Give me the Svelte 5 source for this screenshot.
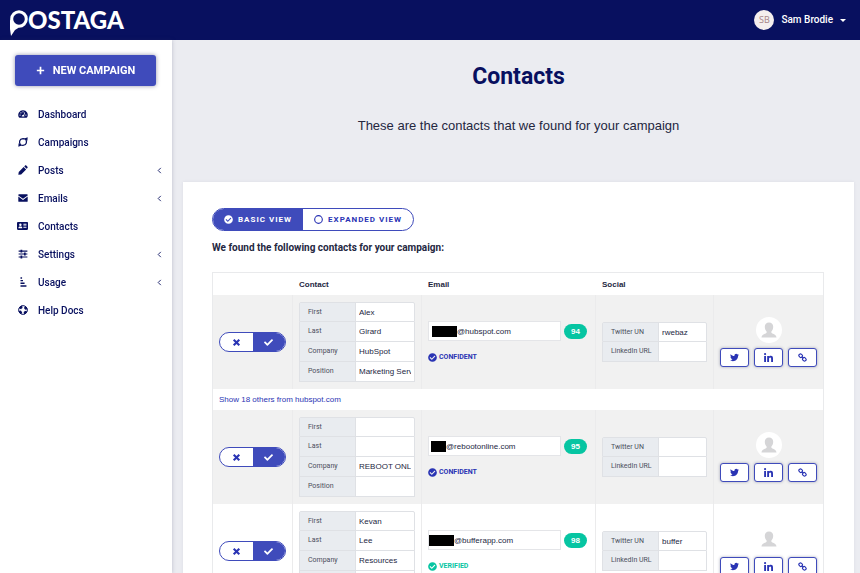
<script lang="ts">
  interface Contact {
    id: number;
    first: string;
    last: string;
    company: string;
    position: string;
    domain: string;
    hidden: { left: number; width: number };
    score: number;
    status: 'confident' | 'verified';
    twitter: string;
    linkedin: string;
    others?: number;
  }

  const NAV = [
    { label: 'Dashboard', icon: 'gauge', children: false },
    { label: 'Campaigns', icon: 'cycle', children: false },
    { label: 'Posts', icon: 'pencil', children: true },
    { label: 'Emails', icon: 'envelope', children: true },
    { label: 'Contacts', icon: 'card', children: false },
    { label: 'Settings', icon: 'sliders', children: true },
    { label: 'Usage', icon: 'usage', children: true },
    { label: 'Help Docs', icon: 'ring', children: false },
  ];

  const FIELDS = [
    { key: 'first', label: 'First' },
    { key: 'last', label: 'Last' },
    { key: 'company', label: 'Company' },
    { key: 'position', label: 'Position' },
  ] as const;

  const SOCIAL = [
    { key: 'twitter', label: 'Twitter UN' },
    { key: 'linkedin', label: 'LinkedIn URL' },
  ] as const;

  let contacts = $state<Contact[]>([
    {
      id: 1, first: 'Alex', last: 'Girard', company: 'HubSpot', position: 'Marketing Services',
      domain: '@hubspot.com', hidden: { left: 3, width: 25 }, score: 94, status: 'confident',
      twitter: 'rwebaz', linkedin: '', others: 18,
    },
    {
      id: 2, first: '', last: '', company: 'REBOOT ONLINE', position: '',
      domain: '@rebootonline.com', hidden: { left: 2, width: 15 }, score: 95, status: 'confident',
      twitter: '', linkedin: '',
    },
    {
      id: 3, first: 'Kevan', last: 'Lee', company: 'Resources', position: '',
      domain: '@bufferapp.com', hidden: { left: 0, width: 25 }, score: 98, status: 'verified',
      twitter: 'buffer', linkedin: '',
    },
  ]);

  let view = $state('basic');
</script>

{#snippet icon(name: string)}
  {#if name === 'gauge'}
    <svg class="icon" viewBox="0 0 16 16" aria-hidden="true">
      <path fill-rule="evenodd" d="M8 2a7.5 7.5 0 0 0-6.6 11.2c.2.5.6.8 1.100.8h11c.5 0 .9-.3 1.100-.8A7.500 7.500 0 0 0 8 2zM8 3.400a1 1 0 1 1 0 2 1 1 0 0 1 0-2zM3.300 8.600a1 1 0 1 1 0 2 1 1 0 0 1 0-2zM4.700 5a1 1 0 1 1 0 2 1 1 0 0 1 0-2zM12.700 8.600a1 1 0 1 1 0 2 1 1 0 0 1 0-2zM10.400 5.200l1 .4-1.700 4.600c.5.5.7 1.200.4 1.900H6a2.100 2.100 0 0 1 2.700-2.400z" />
    </svg>
  {:else if name === 'cycle'}
    <svg class="icon line" viewBox="0 0 16 16" aria-hidden="true">
      <path d="M4 12.500C1.200 9 2 2.800 8 2.600c1.500 0 3 .3 4 1M12 3.500c2.800 3.500 2 9.700-4 9.900-1.500 0-3-.3-4-1" />
      <path class="solid" d="M15.500.5l-.5 5.500-4.700-3.500zM.5 15.500L1 10l4.700 3.500z" />
    </svg>
  {:else if name === 'pencil'}
    <svg class="icon" viewBox="0 0 16 16" aria-hidden="true">
      <path d="M9 3l4 4-8 8-4.500.700.700-4.500zM10 2.200l1.300-1.300c.5-.5 1.400-.5 1.900 0l1.900 1.900c.5.5.5 1.400 0 1.900L13.800 6z" />
    </svg>
  {:else if name === 'envelope'}
    <svg class="icon" viewBox="0 0 16 16" aria-hidden="true">
      <path d="M1.500 2h13c.6 0 1 .4 1 1v.8L8 9.300.500 3.800V3c0-.6.4-1 1-1zM.500 5.700L8 11.100l7.500-5.400V13c0 .6-.4 1-1 1h-13c-.6 0-1-.4-1-1z" />
    </svg>
  {:else if name === 'card'}
    <svg class="icon wide" viewBox="0 0 18 16" aria-hidden="true">
      <path fill-rule="evenodd" d="M1.500 1.500h15c.8 0 1.500.6 1.500 1.400v10.200c0 .8-.7 1.400-1.500 1.400h-15C.7 14.500 0 13.900 0 13.100V2.900C0 2.100.7 1.500 1.500 1.500zM5.500 4a2 2 0 1 0 0 4 2 2 0 0 0 0-4zM2.300 11.700h6.400c0-1.700-.9-2.800-2-2.800H4.300c-1.100 0-2 1.100-2 2.800zM10.500 4.500v1.400h5V4.500zM10.500 7.200v1.400h5V7.200zM10.500 9.900v1.400h5V9.900z" />
    </svg>
  {:else if name === 'sliders'}
    <svg class="icon" viewBox="0 0 16 16" aria-hidden="true">
      <path d="M1 2.500h3V1h2.800v1.500H15v1.700H6.800v1.500H4V4.200H1zM1 7.200h8.500V5.700h2.800v1.500H15v1.700h-2.700v1.500H9.500V8.900H1zM1 11.900h3v-1.500h2.800v1.500H15v1.700H6.800v1.500H4v-1.500H1z" />
    </svg>
  {:else if name === 'usage'}
    <svg class="icon" viewBox="0 0 16 16" aria-hidden="true">
      <path d="M4 .5h2.500v2.300H4zM4 4.600h4v2.300H4zM4 8.800h6.500v2.300H4zM4 13h9.500v2.400H4z" />
    </svg>
  {:else if name === 'ring'}
    <svg class="icon ring" viewBox="0 0 16 16" aria-hidden="true">
      <circle cx="8" cy="8" r="7" stroke-width="1.500" />
      <circle cx="8" cy="8" r="5.300" stroke-width="4" stroke-dasharray="4.800 3.525" stroke-dashoffset="-1.760" />
    </svg>
  {:else if name === 'check'}
    <svg class="icon" viewBox="0 0 512 512" aria-hidden="true">
      <path d="M173.898 439.404l-166.4-166.4c-9.997-9.997-9.997-26.206 0-36.204l36.203-36.204c9.997-9.998 26.207-9.998 36.204 0L192 312.690 432.095 72.596c9.997-9.997 26.207-9.997 36.204 0l36.203 36.204c9.997 9.997 9.997 26.206 0 36.204l-294.400 294.401c-9.998 9.997-26.207 9.997-36.204-.001z" />
    </svg>
  {:else if name === 'times'}
    <svg class="icon" viewBox="0 0 16 16" aria-hidden="true">
      <path d="M4.300 1.700L8 5.400l3.700-3.700 2.600 2.600L10.600 8l3.700 3.700-2.600 2.600L8 10.600l-3.700 3.700-2.600-2.600L5.400 8 1.700 4.300z" />
    </svg>
  {:else if name === 'check-circle'}
    <svg class="icon" viewBox="0 0 512 512" aria-hidden="true">
      <path fill-rule="evenodd" d="M504 256c0 136.967-111.033 248-248 248S8 392.967 8 256 119.033 8 256 8s248 111.033 248 248zM227.314 387.314l184-184c6.248-6.248 6.248-16.379 0-22.627l-22.627-22.627c-6.248-6.249-16.379-6.249-22.628 0L216 308.118l-70.059-70.059c-6.248-6.248-16.379-6.248-22.628 0l-22.627 22.627c-6.248 6.248-6.248 16.379 0 22.627l104 104c6.249 6.249 16.379 6.249 22.628.001z" />
    </svg>
  {:else if name === 'circle'}
    <svg class="icon line" viewBox="0 0 16 16" aria-hidden="true">
      <circle cx="8" cy="8" r="6.800" />
    </svg>
  {:else if name === 'twitter'}
    <svg class="icon" viewBox="0 0 512 512" aria-hidden="true">
      <path d="M459.370 151.716c.325 4.548.325 9.097.325 13.645 0 138.720-105.583 298.558-298.558 298.558-59.452 0-114.680-17.219-161.137-47.106 8.447.974 16.568 1.299 25.340 1.299 49.055 0 94.213-16.568 130.274-44.832-46.132-.975-84.792-31.188-98.112-72.772 6.498.974 12.995 1.624 19.818 1.624 9.421 0 18.843-1.300 27.614-3.573-48.081-9.747-84.143-51.980-84.143-102.985v-1.299c13.969 7.797 30.214 12.670 47.431 13.319-28.264-18.843-46.781-51.005-46.781-87.391 0-19.492 5.197-37.360 14.294-52.954 51.655 63.675 129.300 105.258 216.365 109.807-1.624-7.797-2.599-15.918-2.599-24.040 0-57.828 46.782-104.934 104.934-104.934 30.213 0 57.502 12.670 76.670 33.137 23.715-4.548 46.456-13.320 66.599-25.340-7.798 24.366-24.366 44.833-46.132 57.827 21.117-2.273 41.584-8.122 60.426-16.243-14.292 20.791-32.161 39.308-52.628 54.253z" />
    </svg>
  {:else if name === 'linkedin'}
    <svg class="icon" viewBox="0 0 448 448" aria-hidden="true">
      <path d="M100.280 448H7.400V148.900h92.880zM53.790 108.100C24.090 108.100 0 83.500 0 53.800a53.790 53.790 0 0 1 107.580 0c0 29.700-24.100 54.300-53.790 54.300zM447.900 448h-92.680V302.400c0-34.700-.7-79.200-48.290-79.200-48.290 0-55.690 37.700-55.690 76.700V448h-92.780V148.900h89.080v40.800h1.300c12.400-23.500 42.690-48.300 87.880-48.300 94 0 111.280 61.900 111.280 142.300V448z" />
    </svg>
  {:else if name === 'link'}
    <svg class="icon line" viewBox="0 0 16 16" aria-hidden="true">
      <rect x="1.500" y="2" width="6.500" height="5.500" rx="2.500" transform="rotate(45 4.750 4.750)" />
      <rect x="8" y="8.500" width="6.500" height="5.500" rx="2.500" transform="rotate(45 11.250 11.250)" />
      <path d="M6.500 6.500l3 3" />
    </svg>
  {/if}
{/snippet}

<div class="app">
  <header class="topbar">
    <a class="logo" href="#home" aria-label="Postaga">
      <svg class="logo-mark" viewBox="0 0 18 26" aria-hidden="true">
        <path class="tail" d="M0 9v10l1 7 4-6 4-2.500-4.200-1.600z" />
        <circle cx="9" cy="9" r="7.300" />
      </svg>
      <span>OSTAGA</span>
    </a>
    <button class="user" type="button">
      <span class="initials">SB</span>
      <span>Sam Brodie</span>
      <span class="caret"></span>
    </button>
  </header>

  <div class="body">
    <aside class="sidebar">
      <button class="new-campaign" type="button">
        <svg class="icon" viewBox="0 0 16 16" aria-hidden="true"><path d="M6.500 1.500h3v5h5v3h-5v5h-3v-5h-5v-3h5z" /></svg>
        <span>NEW CAMPAIGN</span>
      </button>
      <nav>
        {#each NAV as item (item.label)}
          <a class="nav-item" href="#{item.icon}">
            <span class="nav-icon">{@render icon(item.icon)}</span>
            <span class="nav-label">{item.label}</span>
            {#if item.children}
              <svg class="chevron" viewBox="0 0 5 8" aria-hidden="true"><path d="M4 1L1 4l3 3" /></svg>
            {/if}
          </a>
        {/each}
      </nav>
    </aside>

    <main>
      <div class="hero">
        <h1>Contacts</h1>
        <p>These are the contacts that we found for your campaign</p>
      </div>

      <section class="panel">
        <div class="view-toggle">
          <button type="button" class:active={view === 'basic'} onclick={() => (view = 'basic')}>
            {@render icon(view === 'basic' ? 'check-circle' : 'circle')}
            <span>BASIC VIEW</span>
          </button>
          <button type="button" class:active={view === 'expanded'} onclick={() => (view = 'expanded')}>
            {@render icon(view === 'expanded' ? 'check-circle' : 'circle')}
            <span>EXPANDED VIEW</span>
          </button>
        </div>
        <p class="found">We found the following contacts for your campaign:</p>

        <table>
          <colgroup>
            <col class="col-pick" />
            <col class="col-contact" />
            <col />
            <col class="col-social" />
            <col class="col-links" />
          </colgroup>
          <thead>
            <tr><th></th><th>Contact</th><th>Email</th><th>Social</th><th></th></tr>
          </thead>
          <tbody>
            {#each contacts as c (c.id)}
              <tr class="contact">
                <td>
                  <div class="pick">
                    <button type="button" aria-label="Reject">{@render icon('times')}</button>
                    <button type="button" class="active" aria-label="Accept">{@render icon('check')}</button>
                  </div>
                </td>
                <td>
                  {#each FIELDS as f (f.key)}
                    <div class="field">
                      <label for="{f.key}-{c.id}">{f.label}</label>
                      <input id="{f.key}-{c.id}" type="text" bind:value={c[f.key]} />
                    </div>
                  {/each}
                </td>
                <td>
                  <div class="email-row">
                    <div class="email-box">
                      <span class="redacted" style="width: {c.hidden.width}px; margin-left: {c.hidden.left}px"></span>
                      <input type="text" aria-label="Email" bind:value={c.domain} />
                    </div>
                    <span class="score">{c.score}</span>
                  </div>
                  <div class="status" class:verified={c.status === 'verified'}>
                    {@render icon('check-circle')}
                    <span>{c.status.toUpperCase()}</span>
                  </div>
                </td>
                <td>
                  {#each SOCIAL as f (f.key)}
                    <div class="field">
                      <label for="{f.key}-{c.id}">{f.label}</label>
                      <input id="{f.key}-{c.id}" type="text" bind:value={c[f.key]} />
                    </div>
                  {/each}
                </td>
                <td>
                  <div class="profile">
                    <svg class="avatar" viewBox="0 0 26 26" aria-hidden="true">
                      <circle cx="13" cy="13" r="13" />
                      <path d="M13 5.500c2.600 0 4.200 1.800 4.200 4.300 0 1.900-.7 3.600-1.800 4.600v1.300c.3.900 5.100 1.300 5.100 4.800H5.500c0-3.500 4.800-3.900 5.100-4.800v-1.300c-1.100-1-1.800-2.700-1.800-4.600 0-2.500 1.600-4.300 4.200-4.300z" />
                    </svg>
                    <div class="links">
                      <button type="button" aria-label="Twitter">{@render icon('twitter')}</button>
                      <button type="button" aria-label="LinkedIn">{@render icon('linkedin')}</button>
                      <button type="button" aria-label="Website">{@render icon('link')}</button>
                    </div>
                  </div>
                </td>
              </tr>
              {#if c.others}
                <tr class="more">
                  <td colspan="5"><a href="#others-{c.id}">Show {c.others} others from {c.domain.slice(1)}</a></td>
                </tr>
              {/if}
            {/each}
          </tbody>
        </table>
      </section>
    </main>
  </div>
</div>

<style>
  :global(body) { background: #ebecf1; }

  .app {
    --navy: #08105f;
    --primary: #3f4bbb;
    --link: #2a34b4;
    --green: #06c5a2;
    --ink: #24273f;
    display: flex; flex-direction: column; height: 100vh;
    font-family: "Liberation Sans", Arial, sans-serif; font-size: 8px; color: var(--ink);
  }
  .app :is(a, button, input, label, div, span, td, th, tr, table) { box-sizing: border-box; }
  button, input { font: inherit; color: inherit; letter-spacing: inherit; margin: 0; padding: 0; border: 0; background: none; }
  button { cursor: pointer; }
  a { color: inherit; text-decoration: none; }

  .icon { display: block; flex: none; width: 9px; height: 9px; fill: currentColor; }
  .icon.wide { width: 11px; height: 10px; }
  .icon.line { fill: none; stroke: currentColor; stroke-width: 2; }
  .icon.line .solid { fill: currentColor; stroke: none; }
  .icon.ring { fill: none; stroke: currentColor; }

  /* Top bar */
  .topbar {
    display: flex; justify-content: space-between; align-items: center; flex: none;
    height: 40px; padding: 0 14px 0 10px; box-sizing: border-box;
    background: var(--navy); color: #fff;
  }
  .logo {
    display: flex; align-items: flex-start; height: 26px; margin-top: 6px;
    font: 900 24px/20px Lato, sans-serif;
  }
  .logo-mark { width: 18px; height: 26px; fill: none; stroke: #fff; stroke-width: 3; }
  .logo-mark .tail { fill: #fff; stroke: none; }
  .user { display: flex; align-items: center; gap: 7px; font: 500 10px/20px Roboto, sans-serif; }
  .initials {
    width: 20px; height: 20px; border-radius: 50%; background: #f5eeee; color: #a58487;
    font: 9px/20px "Open Sans", sans-serif; text-align: center;
  }
  .caret { border: 3px solid transparent; border-top-color: #fff; border-bottom: 0; }

  .body { display: flex; flex: 1; min-height: 0; }

  /* Sidebar */
  .sidebar {
    flex: none; width: 172px; box-sizing: border-box; padding: 15px 16px 0 15px;
    background: #fff; box-shadow: 0 0 4px rgba(40, 44, 90, 0.25); z-index: 1;
    font-family: Roboto, sans-serif; color: var(--navy);
  }
  .new-campaign {
    display: flex; align-items: center; justify-content: center; gap: 8px;
    width: 100%; height: 31px; margin-bottom: 14px; border-radius: 3px;
    background: var(--primary); color: #fff; font-size: 11px; font-weight: 700;
    box-shadow: 0 0 4px rgba(40, 44, 90, 0.5);
  }
  .nav-item { display: flex; align-items: center; height: 28px; font-size: 10px; font-weight: 500; }
  .nav-icon { display: flex; justify-content: center; width: 15px; margin-right: 8px; }
  .nav-label { flex: 1; }
  .nav-icon .icon { height: 10px; }
  .nav-icon .icon:not(.wide) { width: 10px; }
  .chevron { width: 5px; height: 7px; margin-right: -6px; fill: none; stroke: currentColor; stroke-width: 1; }

  /* Main */
  main {
    flex: 1; min-width: 0; padding: 0 6px 0 11px; overflow: auto; scrollbar-width: none;
    background: #ebecf1;
  }
  .hero { height: 142px; text-align: center; }
  h1 { margin: 0; padding-top: 23px; font: 700 23px/28px Roboto, sans-serif; color: var(--navy); }
  .hero p { margin: 25px 0 0; font-size: 13px; line-height: 20px; }

  .panel { padding: 26px 30px 40px 29px; background: #fff; box-shadow: 0 0 3px rgba(40, 44, 90, 0.08); }
  .view-toggle {
    display: flex; width: fit-content; height: 23px; border: 1px solid var(--primary); border-radius: 12px;
    overflow: hidden; font: 700 8px/21px Roboto, sans-serif; letter-spacing: 1px; color: var(--link);
  }
  .view-toggle button { display: flex; align-items: center; gap: 5px; padding: 0 11px; }
  .view-toggle .active { background: var(--primary); color: #fff; }
  .view-toggle .icon.line { stroke-width: 2; }
  .found { margin: 9px 0 16px; font: 700 10px/16px Roboto, sans-serif; }

  table {
    width: 100%; table-layout: fixed; border-collapse: separate; border-spacing: 0;
    border: 1px solid #e9eaec; border-bottom: 0;
  }
  .col-pick { width: 79px; }
  .col-contact { width: 129px; }
  .col-social { width: 118px; }
  .col-links { width: 110px; }
  th { height: 22px; padding: 0 7px; text-align: left; }
  td { padding: 7px 6px; vertical-align: middle; border-left: 1px solid #ebebec; }
  td:first-child { border-left: 0; }
  .contact { height: 94px; }
  tbody tr:nth-child(odd) { background: #f1f1f1; }
  .more td { height: 21px; padding-top: 0; padding-bottom: 0; }
  .more a { color: var(--link); }

  .pick {
    display: flex; width: 67px; height: 20px; overflow: hidden;
    border: 1px solid var(--primary); border-radius: 10px; background: #fff; color: var(--link);
  }
  .pick button { flex: 1; display: flex; align-items: center; justify-content: center; }
  .pick .active { background: var(--primary); color: #fff; }

  .field {
    display: flex; height: 20px; border: 1px solid #dfe1e5; border-top-width: 0;
    background: #fff;
  }
  .field:first-child { border-top-width: 1px; border-radius: 2px 2px 0 0; }
  .field label {
    flex: none; width: 56px; padding-left: 8px; background: #e9ecf0;
    border-right: 1px solid #dfe1e5; color: #4b4e5c; font: 7px/19px Roboto, sans-serif;
  }
  .field input { flex: 1; min-width: 0; padding: 0 3px; }

  .email-row { display: flex; align-items: center; gap: 3px; }
  .email-box {
    display: flex; align-items: center; flex: 1; min-width: 0; height: 20px;
    border: 1px solid #e4e5e8; background: #fff;
  }
  .email-box input { flex: 1; min-width: 0; }
  .redacted { flex: none; height: 11px; background: #000; }
  .score {
    width: 23px; height: 15px; border-radius: 8px; background: var(--green); color: #fff;
    font-weight: 700; line-height: 15px; text-align: center; margin-right: 2px;
  }
  .status {
    display: flex; align-items: center; gap: 2px; height: 12px; margin-top: 10px;
    color: var(--link); font: 700 7px/12px Roboto, sans-serif;
  }
  .status.verified { color: var(--green); }

  .profile { display: flex; flex-direction: column; align-items: center; gap: 5px; }
  .avatar { width: 26px; height: 26px; fill: #fff; }
  .avatar path { fill: #d5d5d7; }
  .links { display: flex; gap: 5px; }
  .links button {
    display: flex; align-items: center; justify-content: center; width: 29px; height: 19px;
    border: 1px solid var(--primary); border-radius: 3px; background: #fff; color: var(--link);
    box-shadow: 0 0 3px rgba(40, 44, 90, 0.4);
  }
</style>
